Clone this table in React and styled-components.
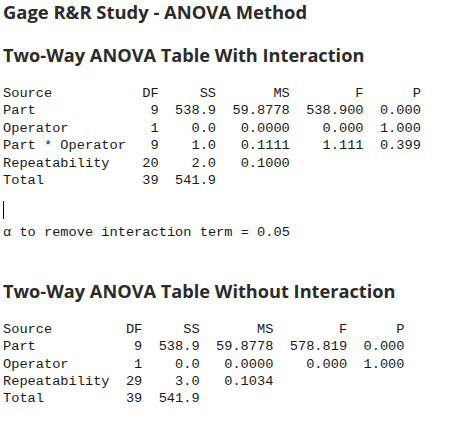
import React from 'react'
import styled, { createGlobalStyle } from 'styled-components'

const GlobalStyle = createGlobalStyle`
  html, body {
    margin: 0;
    padding: 0;
    background: #ffffff;
  }
`

const withInteraction = {
  sourceWidth: 17,
  rows: [
    ['Source', 'DF', 'SS', 'MS', 'F', 'P'],
    ['Part', '9', '538.9', '59.8778', '538.900', '0.000'],
    ['Operator', '1', '0.0', '0.0000', '0.000', '1.000'],
    ['Part * Operator', '9', '1.0', '0.1111', '1.111', '0.399'],
    ['Repeatability', '20', '2.0', '0.1000', '', ''],
    ['Total', '39', '541.9', '', '', ''],
  ],
}

const withoutInteraction = {
  sourceWidth: 15,
  rows: [
    ['Source', 'DF', 'SS', 'MS', 'F', 'P'],
    ['Part', '9', '538.9', '59.8778', '578.819', '0.000'],
    ['Operator', '1', '0.0', '0.0000', '0.000', '1.000'],
    ['Repeatability', '29', '3.0', '0.1034', '', ''],
    ['Total', '39', '541.9', '', '', ''],
  ],
}

function AnovaTable({ data }) {
  return (
    <TableStyled>
      {data.rows.map((row, i) => (
        <Row key={i} $source={data.sourceWidth}>
          {row.map((cell, j) => (
            <Cell key={j} $left={j === 0}>{cell}</Cell>
          ))}
        </Row>
      ))}
    </TableStyled>
  )
}

function App() {
  return (
    <>
      <GlobalStyle />
      <Page>
        <Title>Gage R&amp;R Study - ANOVA Method</Title>
        <Heading>Two-Way ANOVA Table With Interaction</Heading>
        <AnovaTable data={withInteraction} />
        <Cursor />
        <Note>α to remove interaction term = 0.05</Note>
        <Heading $gap={38}>Two-Way ANOVA Table Without Interaction</Heading>
        <AnovaTable data={withoutInteraction} />
      </Page>
    </>
  )
}

const Page = styled.div`
  display: flex;
  flex-direction: column;
  align-items: flex-start;
  padding: 1px 0 0 3px;
  color: #1c1c1c;
`

const Title = styled.h1`
  margin: 0;
  font-family: "Open Sans", "DejaVu Sans", sans-serif;
  font-weight: 700;
  font-size: 18.4px;
  line-height: 22px;
  color: #2b2b2b;
`

const Heading = styled.h2`
  margin: ${p => p.$gap || 21}px 0 0 0;
  font-family: "Open Sans", "DejaVu Sans", sans-serif;
  font-weight: 700;
  font-size: 18.2px;
  line-height: 22px;
  color: #2b2b2b;
`

const TableStyled = styled.div`
  margin-top: 19px;
  font-family: "Liberation Mono", "Courier New", monospace;
  font-size: 13.67px;
  line-height: 17.4px;
  color: #1a1a1a;
`

const Row = styled.div`
  display: grid;
  grid-template-columns: ${p => p.$source}ch 2ch 7ch 9ch 9ch 7ch;
  white-space: pre;
`

const Cell = styled.span`
  text-align: ${p => (p.$left ? 'left' : 'right')};
`

const Cursor = styled.div`
  width: 1px;
  height: 18px;
  margin-top: 12px;
  background: #000;
`

const Note = styled.div`
  margin-top: 5px;
  font-family: "Liberation Mono", "Courier New", monospace;
  font-size: 13.67px;
  line-height: 17.4px;
  color: #1a1a1a;
  white-space: pre;
`

export default App
